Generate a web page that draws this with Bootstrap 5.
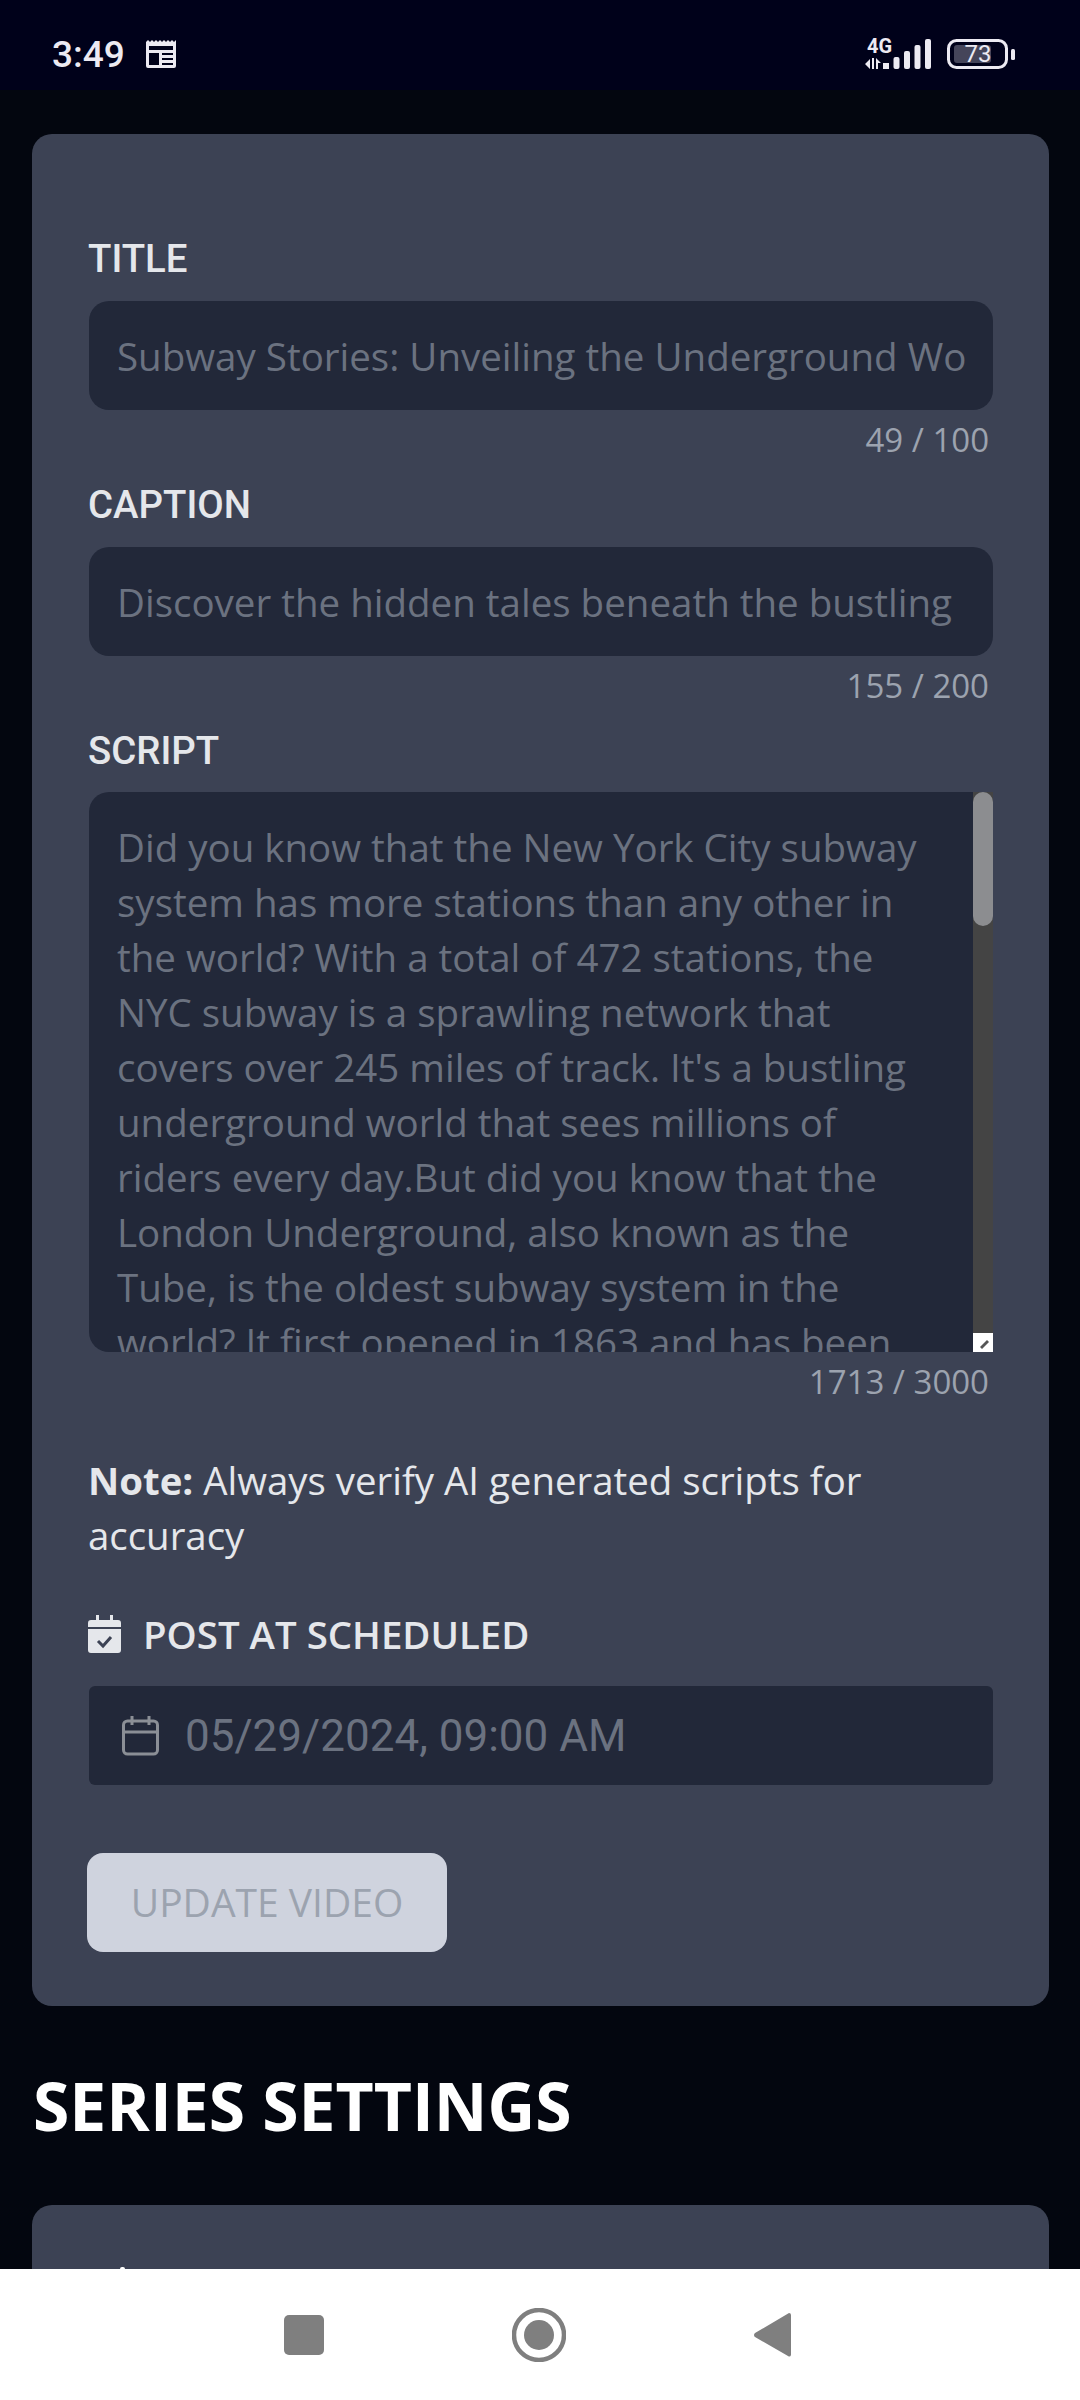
<!DOCTYPE html>
<html lang="en">
<head>
<meta charset="utf-8">
<title>Edit video</title>
<link href="https://cdn.jsdelivr.net/npm/bootstrap@5.3.0/dist/css/bootstrap.min.css" rel="stylesheet">
<style>
html,body{height:2400px;margin:0;overflow:hidden;background:#03060f;}
body{font-family:"Open Sans","Noto Sans",sans-serif;color:#e5e7eb;}
.screen{height:2400px;}
.statusbar{height:90px;padding:18px 65px 0 52px;background:#00011a;color:#eceaf2;}
.clock{font-family:Roboto,sans-serif;font-size:37px;font-weight:500;line-height:1;width:94px;}
.scrollarea{min-height:0;overflow:hidden;padding:44px 31px 0 32px;}
.panel{background:#3c4254;border:0;border-radius:20px;padding:103px 56px 54px 57px;color:#e5e7eb;}
.fieldlabel{font-family:Roboto,sans-serif;font-size:38.4px;font-weight:500;line-height:44px;margin:0 0 20px -1px;color:#e5e7eb;}
.field{background:#222839;border:0;border-radius:20px;height:109px;padding:0 26px 0 28px;font-size:38.5px;color:#6b7280;box-shadow:none;}
.field:focus{background:#222839;color:#6b7280;box-shadow:none;}
.fieldnarrow{padding-right:31px;}
.counter{font-size:33px;line-height:44px;margin:8px 4px 21px 0;color:#9ca3af;text-align:right;}
.scriptwrap{height:560px;margin-top:-1px;}
.scripttext{display:block;width:100%;height:560px;background:#222839;border:0;outline:0;resize:none;overflow:hidden;padding:28px 48px 0 28px;font-size:38.5px;line-height:55px;color:#6b7280;font-family:inherit;border-radius:20px;}
.track{position:absolute;top:0;right:0;width:20px;height:541px;background:#444;}
.thumb{position:absolute;top:0;right:0;width:20px;height:134px;background:#8c8d90;border-radius:10px;}
.grip{position:absolute;right:0;bottom:0;width:20px;height:19px;background:#fff;line-height:0;}
.note{font-size:38.4px;line-height:55px;margin:28px 0 49px -1px;color:#e5e7eb;}
.note strong{font-weight:700;}
.schedlabel{font-size:38.4px;font-weight:600;line-height:44px;gap:22px;margin:0 0 30px -1px;color:#e5e7eb;}
.datefield{height:99px;background:#222839;border-radius:6px;padding:0 0 0 33px;gap:26px;}
.datefield input{background:transparent;border:0;outline:0;padding:0;flex:1;min-width:0;font-family:Roboto,sans-serif;font-size:44px;color:#6b7280;}
.updatebtn{display:block;width:360px;height:99px;margin:68px 0 0 -2px;padding:0;background:#cfd3de;border:0;border-radius:16px;font-size:39px;font-weight:500;color:#9ca3af;opacity:1;}
.updatebtn:disabled{background:#cfd3de;color:#9ca3af;opacity:1;}
.sectiontitle{font-size:66px;font-weight:700;line-height:82px;margin:58px 0 59px 1px;color:#fff;}
.panelnext{height:120px;border-radius:20px 20px 0 0;padding:0;position:relative;}
.tick{position:absolute;left:88px;top:62px;width:5px;height:2px;background:#fff;border-radius:2px 2px 0 0;}
.sysnav{height:131px;background:#fff;padding:0;position:relative;z-index:2;}
.sysnav svg{position:absolute;top:39px;}
</style>
</head>
<body>
<div class="screen d-flex flex-column">
  <header class="statusbar d-flex align-items-center flex-shrink-0">
    <span class="clock">3:49</span>
    <svg width="30" height="28" viewBox="0 0 30 28" aria-hidden="true"><path fill="#eceaf2" d="M0 2 2 0l2 2 2-2 2 2 2-2 2 2 2-2 2 2 2-2 2 2 2-2 2 2 2-2 2 2 2-2v26a2 2 0 0 1-2 2H2a2 2 0 0 1-2-2z"/><path fill="#00011a" d="M3 6h24v4H3zM3 13h10v12H3zM16 13h11v2H16zM16 18h11v2H16zM16 23h11v2H16z"/></svg>
    <div class="ms-auto d-flex align-items-center">
      <svg width="66" height="32" viewBox="0 0 66 32" aria-hidden="true" class="me-0">
        <text x="2" y="15" font-family="Roboto,sans-serif" font-size="20" font-weight="700" fill="#eceaf2">4G</text>
        <path fill="#eceaf2" d="M0 26l5-5v10zM7 20h2v11H7zM11 20l5 5h-3v6h-2z"/>
        <rect x="18" y="25" width="6" height="6" fill="#eceaf2"/><rect x="28.500" y="19" width="6" height="12" rx="2" fill="#eceaf2"/><rect x="39" y="13" width="6" height="18" rx="2" fill="#eceaf2"/><rect x="49.500" y="7" width="6" height="24" rx="2" fill="#eceaf2"/><rect x="60" y="1" width="6" height="30" rx="2" fill="#eceaf2"/>
      </svg>
      <svg width="68" height="30" viewBox="0 0 68 30" class="ms-3" aria-hidden="true">
        <rect x="1.500" y="1.500" width="58" height="27" rx="8" fill="none" stroke="#eceaf2" stroke-width="3"/>
        <rect x="7" y="6" width="37" height="18" rx="3" fill="#45455a"/>
        <text x="31" y="23" text-anchor="middle" font-family="Roboto,sans-serif" font-size="24" fill="#eceaf2">73</text>
        <rect x="64" y="10" width="4" height="11" rx="1.500" fill="#eceaf2"/>
      </svg>
    </div>
  </header>

  <main class="scrollarea flex-grow-1">
    <form class="card panel">
      <label class="fieldlabel" for="f1">TITLE</label>
      <input id="f1" class="form-control field" readonly value="Subway Stories: Unveiling the Underground World's Secrets">
      <div class="counter">49 / 100</div>

      <label class="fieldlabel" for="f2">CAPTION</label>
      <input id="f2" class="form-control field fieldnarrow" readonly value="Discover the hidden tales beneath the bustling city streets">
      <div class="counter">155 / 200</div>

      <label class="fieldlabel" for="f3">SCRIPT</label>
      <div class="scriptwrap position-relative">
        <textarea id="f3" class="scripttext" readonly>Did you know that the New York City subway system has more stations than any other in the world? With a total of 472 stations, the NYC subway is a sprawling network that covers over 245 miles of track. It's a bustling underground world that sees millions of riders every day.But did you know that the London Underground, also known as the Tube, is the oldest subway system in the world? It first opened in 1863 and has been carrying passengers ever since.</textarea>
        <span class="track"></span><span class="thumb"></span>
        <span class="grip"><svg width="20" height="19" viewBox="0 0 20 19" aria-hidden="true"><path d="M7 14 14 7l2 2-7 7z" fill="#555"/></svg></span>
      </div>
      <div class="counter">1713 / 3000</div>

      <p class="note"><strong>Note:</strong> Always verify AI generated scripts for accuracy</p>

      <div class="schedlabel d-flex align-items-center">
        <svg width="33" height="38" viewBox="0 0 33 38" aria-hidden="true"><path fill="#e5e7eb" d="M8 0h3v5h11V0h3v5h5a3 3 0 0 1 3 3v4H0V8a3 3 0 0 1 3-3h5zM0 14h33v21a3 3 0 0 1-3 3H3a3 3 0 0 1-3-3z"/><path d="M10 26l5 5 8-9" fill="none" stroke="#3c4254" stroke-width="3"/></svg>
        <span>POST AT SCHEDULED</span>
      </div>
      <div class="datefield d-flex align-items-center">
        <svg width="37" height="41" viewBox="0 0 37 41" aria-hidden="true" fill="none" stroke="#8b8f96" stroke-width="3"><rect x="1.500" y="6" width="34" height="33" rx="4"/><path d="M1.500 17h34M10 1v9M27 1v9"/></svg>
        <input readonly value="05/29/2024, 09:00 AM" aria-label="Schedule date">
      </div>
      <button type="button" class="btn updatebtn" disabled>UPDATE VIDEO</button>
    </form>

    <h2 class="sectiontitle">SERIES SETTINGS</h2>
    <section class="card panel panelnext"><span class="tick"></span></section>
  </main>

  <nav class="navbar sysnav flex-shrink-0 d-block" aria-label="System navigation">
    <svg style="left:284px;top:46px" width="40" height="40" viewBox="0 0 40 40" aria-hidden="true"><rect width="40" height="40" rx="5" fill="#7f7f7f"/></svg>
    <svg style="left:512px" width="54" height="54" viewBox="0 0 54 54" aria-hidden="true"><circle cx="27" cy="27" r="25" fill="none" stroke="#7f7f7f" stroke-width="4.500"/><circle cx="27" cy="27" r="15" fill="#7f7f7f"/></svg>
    <svg style="left:754px;top:43px" width="37" height="46" viewBox="0 0 37 46" aria-hidden="true"><path d="M35 1a2 2 0 0 1 2 2v40a2 2 0 0 1-3 1L1 25a2.500 2.500 0 0 1 0-4z" fill="#7f7f7f"/></svg>
  </nav>
</div>
<script src="https://cdn.jsdelivr.net/npm/bootstrap@5.3.0/dist/js/bootstrap.bundle.min.js"></script>
</body>
</html>
